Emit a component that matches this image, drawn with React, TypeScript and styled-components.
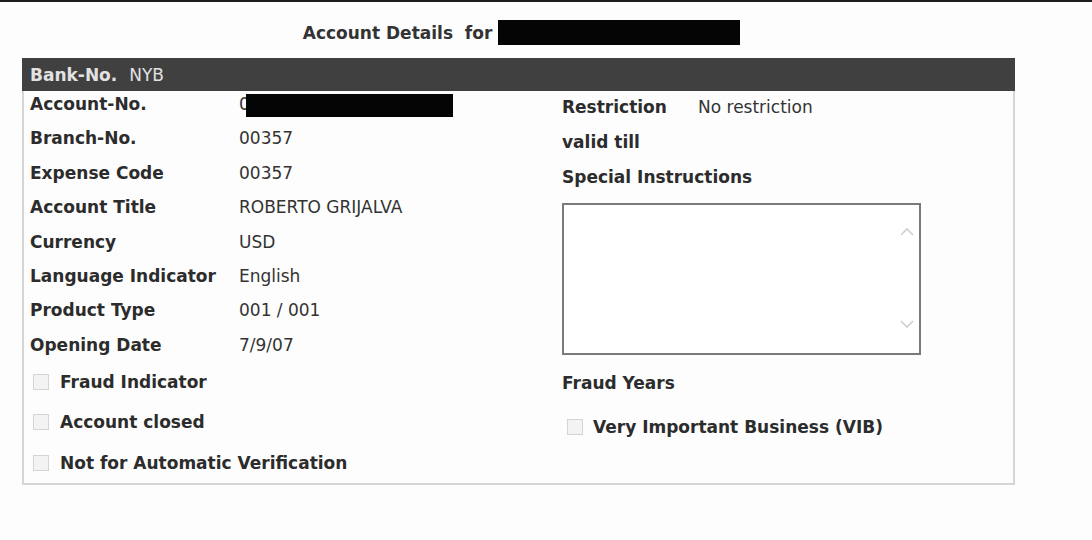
import { Fragment } from "react";
import styled, { createGlobalStyle } from "styled-components";

const GlobalStyle = createGlobalStyle`
  html, body {
    margin: 0;
    padding: 0;
    background: #fdfdfd;
  }
  body {
    font-family: "DejaVu Sans", Verdana, sans-serif;
    font-size: 17px;
    color: #2e2e2e;
    border-top: 2px solid #1e1e1e;
    min-height: 538px;
  }
`;

const Page = styled.div`
  width: 993px;
  margin-left: 22px;
`;

const Title = styled.h1`
  margin: 0;
  height: 56px;
  padding-top: 5px;
  box-sizing: border-box;
  display: flex;
  align-items: center;
  justify-content: center;
  font-size: 17px;
  font-weight: bold;
  color: #333;
  white-space: pre;
  padding-left: 6px;
`;

const Redacted = styled.span<{ $w: number; $h: number }>`
  display: inline-block;
  width: ${(p) => p.$w}px;
  height: ${(p) => p.$h}px;
  background: #050505;
`;

const HeaderBar = styled.div`
  height: 33px;
  background: #404040;
  display: flex;
  align-items: center;
  padding-left: 8px;
  color: #e2e2e2;
  font-size: 17px;
`;

const HeaderLabel = styled.span`
  font-weight: bold;
  margin-right: 12px;
`;

const Body = styled.div`
  display: grid;
  grid-template-columns: 538px 1fr;
  border: 2px solid #d6d6d6;
  border-top: none;
  height: 394px;
  box-sizing: border-box;
`;

const Column = styled.div<{ $pl: number }>`
  display: flex;
  flex-direction: column;
  padding-left: ${(p) => p.$pl}px;
`;

const Fields = styled.div`
  display: grid;
  grid-template-columns: 209px 1fr;
  row-gap: 8.4px;
  line-height: 26px;
`;

const Label = styled.span`
  font-weight: bold;
  color: #2c2c2c;
`;

const Value = styled.span`
  color: #333;
  display: flex;
  align-items: center;
`;

const CheckList = styled.div<{ $mt: number; $gap: number }>`
  display: flex;
  flex-direction: column;
  margin-top: ${(p) => p.$mt}px;
  gap: ${(p) => p.$gap}px;
`;

const CheckRow = styled.label<{ $indent: number; $gap: number }>`
  display: flex;
  align-items: center;
  gap: ${(p) => p.$gap}px;
  padding-left: ${(p) => p.$indent}px;
  line-height: 26px;
  font-weight: bold;
  color: #2c2c2c;
`;

const Box = styled.span`
  width: 14px;
  height: 14px;
  border: 1px solid #d4d4d4;
  background: #f3f3f3;
  flex: none;
`;

const RightFields = styled.div`
  display: grid;
  grid-template-columns: 136px 1fr;
  row-gap: 9px;
  line-height: 26px;
  margin-top: 3px;
`;

const TextArea = styled.div`
  position: relative;
  width: 359px;
  height: 152px;
  box-sizing: border-box;
  border: 2px solid #7a7a7a;
  margin-top: 13px;
  background: #fff;
`;

const Arrow = styled.svg<{ $top: number }>`
  position: absolute;
  right: 4px;
  top: ${(p) => p.$top}px;
`;

const RightLabel = styled(Label)`
  display: block;
  line-height: 26px;
  margin-top: 15px;
`;

const leftFields: [string, React.ReactNode][] = [
  [
    "Account-No.",
    <>
      <span>0</span>
      <Redacted $w={207} $h={23} style={{ marginLeft: -4, marginTop: 2 }} />
    </>,
  ],
  ["Branch-No.", "00357"],
  ["Expense Code", "00357"],
  ["Account Title", "ROBERTO GRIJALVA"],
  ["Currency", "USD"],
  ["Language Indicator", "English"],
  ["Product Type", "001 / 001"],
  ["Opening Date", "7/9/07"],
];

const leftChecks = ["Fraud Indicator", "Account closed", "Not for Automatic Verification"];

export default function App() {
  return (
    <>
      <GlobalStyle />
      <Page>
        <Title>
          {"Account Details  for "}
          <Redacted $w={242} $h={25} />
        </Title>
        <HeaderBar>
          <HeaderLabel>Bank-No.</HeaderLabel>
          NYB
        </HeaderBar>
        <Body>
          <Column $pl={6}>
            <Fields>
              {leftFields.map(([label, value]) => (
                <Fragment key={label}>
                  <Label>{label}</Label>
                  <Value>{value}</Value>
                </Fragment>
              ))}
            </Fields>
            <CheckList $mt={11} $gap={14.5}>
              {leftChecks.map((c) => (
                <CheckRow key={c} $indent={3} $gap={11}>
                  <Box />
                  {c}
                </CheckRow>
              ))}
            </CheckList>
          </Column>
          <Column $pl={0}>
            <RightFields>
              <Label>Restriction</Label>
              <Value>No restriction</Value>
              <Label>valid till</Label>
              <Value />
              <Label style={{ gridColumn: "1 / 3" }}>Special Instructions</Label>
            </RightFields>
            <TextArea>
              <Arrow $top={22} width="16" height="10" viewBox="0 0 16 10">
                <path d="M2 8 L8 2 L14 8" fill="none" stroke="#d0d0d0" strokeWidth="1.6" />
              </Arrow>
              <Arrow $top={114} width="16" height="10" viewBox="0 0 16 10">
                <path d="M2 2 L8 8 L14 2" fill="none" stroke="#d0d0d0" strokeWidth="1.6" />
              </Arrow>
            </TextArea>
            <RightLabel>Fraud Years</RightLabel>
            <CheckList $mt={18} $gap={0}>
              <CheckRow $indent={5} $gap={10}>
                <Box />
                Very Important Business (VIB)
              </CheckRow>
            </CheckList>
          </Column>
        </Body>
      </Page>
    </>
  );
}
